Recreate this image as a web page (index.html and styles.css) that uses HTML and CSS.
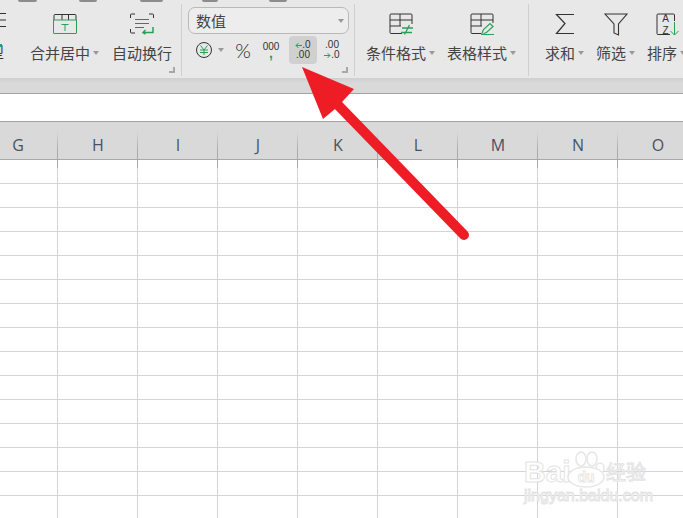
FILE: index.html
```html
<!DOCTYPE html>
<html lang="zh-CN">
<head>
    <meta charset="UTF-8">
    <meta name="viewport" content="width=device-width, initial-scale=1.0">
    <title>数值</title>
    <link rel="stylesheet" href="styles.css">
</head>
<body>
    <div class="ribbon">
        <div class="top-bits">
            <span class="bit b1"></span><span class="bit b2"></span><span class="bit b3"></span><span class="bit b4"></span><span class="bit b5"></span>
        </div>

        <div class="group group-align">
            <svg class="stub-icon" width="7" height="14" viewBox="0 0 7 14"><path d="M0 .5h6M0 7h6M0 13.500h6" stroke="#333" fill="none"/></svg>
            <span class="stub-text">型</span>
            <i class="stub-dot"></i>
            <div class="tool">
                <svg class="icon" width="24" height="23" viewBox="0 0 24 23">
                    <path d="M1 7V2.500q0-1 1-1h20q1 0 1 1V7M9 1.500V7M15.500 1.500V7" stroke="#333" fill="none"/>
                    <path d="M.5 7h23v13q0 .5-.5.5H1q-.5 0-.5-.5zM8.500 11.500h7M12 11.500V18" stroke="#27a05a" fill="none"/>
                </svg>
                <div class="label">合并居中<i class="caret"></i></div>
            </div>
            <div class="tool">
                <svg class="icon" width="24" height="23" viewBox="0 0 24 23">
                    <path d="M.5 5V2q0-1 1-1H5M19 1h3.500q1 0 1 1v3M.5 16v3q0 1 1 1H5" stroke="#333" fill="none"/>
                    <path d="M5 6.500h14M5 10.500h14M5 14.500h9" stroke="#666" fill="none"/>
                    <path d="M23 14v5.500H13M15.500 17L13 19.500l2.500 1.500" stroke="#27a05a" stroke-width="1.500" fill="none"/>
                </svg>
                <div class="label">自动换行</div>
            </div>
            <i class="corner"></i>
        </div>

        <div class="group group-number">
            <div class="combo"><span>数值</span><i class="caret"></i></div>
            <div class="num-row">
                <div class="cur">
                    <svg width="16" height="16" viewBox="0 0 16 16">
                        <circle cx="8" cy="8" r="7.500" stroke="#333" fill="none"/>
                        <path d="M4.500 3.500L8 8l3.500-4.500M4 8h8M4 10.500h8M8 8v5" stroke="#27a05a" fill="none"/>
                    </svg>
                    <i class="caret"></i>
                </div>
                <div class="nf pct">%</div>
                <div class="nf stack"><span>000</span><span class="green comma">,</span></div>
                <div class="nf stack active">
                    <span><svg class="mini" width="7" height="7" viewBox="0 0 7 7"><path d="M7 3.500H1M3.500 1L1 3.500 3.500 6" stroke="#27a05a" fill="none"/></svg>.0</span>
                    <span>.00</span>
                </div>
                <div class="nf stack">
                    <span>.00</span>
                    <span><svg class="mini" width="7" height="7" viewBox="0 0 7 7"><path d="M0 3.500h6M3.500 1L6 3.500 3.500 6" stroke="#27a05a" fill="none"/></svg>.0</span>
                </div>
            </div>
            <i class="corner"></i>
        </div>

        <div class="group group-style">
            <div class="tool">
                <svg class="icon" width="24" height="23" viewBox="0 0 24 23">
                    <path d="M13 20.500H2q-1 0-1-1V2q0-1 1-1h20q1 0 1 1v9M1 7h22M1 13h11M11 1v12" stroke="#333" fill="none"/>
                    <path d="M13 15h11M12 19.500h11M20.500 12l-5 9.500" stroke="#27a05a" stroke-width="1.300" fill="none"/>
                </svg>
                <div class="label">条件格式<i class="caret"></i></div>
            </div>
            <div class="tool">
                <svg class="icon" width="24" height="23" viewBox="0 0 24 23">
                    <path d="M11 20.500H2q-1 0-1-1V2q0-1 1-1h20q1 0 1 1v8M1 7h22M1 13h11M11 1v12" stroke="#333" fill="none"/>
                    <path d="M11.500 21.500l2-5 6.500-6 3 3-6.500 6-3 1M11 21.500h13" stroke="#27a05a" stroke-width="1.200" fill="none"/>
                </svg>
                <div class="label">表格样式<i class="caret"></i></div>
            </div>
        </div>

        <div class="group group-edit">
            <div class="tool">
                <svg class="icon" width="20" height="23" viewBox="0 0 20 23">
                    <path d="M19 1.500H1.500L10 10.500 1.500 20.500H19" stroke="#333" stroke-width="1.200" fill="none"/>
                </svg>
                <div class="label">求和<i class="caret"></i></div>
            </div>
            <div class="tool">
                <svg class="icon" width="24" height="23" viewBox="0 0 24 23">
                    <path d="M1 1h22l-8.500 10v11L10 20V11z" stroke="#333" stroke-width="1.100" fill="none"/>
                </svg>
                <div class="label">筛选<i class="caret"></i></div>
            </div>
            <div class="tool">
                <svg class="icon sort-icon" width="24" height="23" viewBox="0 0 24 23">
                    <path d="M14 21.500H2q-1 0-1-1V2q0-1 1-1h15.500q1 0 1 1v6" stroke="#333" fill="none"/>
                    <text x="9.500" y="9" class="sort-letter">A</text>
                    <text x="9.500" y="20.500" class="sort-letter">Z</text>
                    <path d="M18.500 9v13M14.500 18l4 4 4-4" stroke="#27a05a" fill="none"/>
                </svg>
                <div class="label">排序<i class="caret"></i></div>
            </div>
        </div>
    </div>

    <div class="band"></div>
    <div class="formula-bar"></div>

    <div class="col-header">
        <div class="col">G</div>
        <div class="col">H</div>
        <div class="col">I</div>
        <div class="col">J</div>
        <div class="col">K</div>
        <div class="col">L</div>
        <div class="col">M</div>
        <div class="col">N</div>
        <div class="col">O</div>
    </div>
    <div class="cells"></div>

    <svg class="arrow" width="683" height="518" viewBox="0 0 683 518">
        <path d="M338 105L464 235" stroke="#ee1c25" stroke-width="10" stroke-linecap="round"/>
        <path d="M302 67L354 89 342 102 335 109 323 119z" fill="#ee1c25"/>
    </svg>

    <div class="watermark">
        <div class="wm-logo">
            <span class="wm-bai">Bai</span>
            <svg class="wm-paw" width="40" height="38" viewBox="0 0 40 38">
                <g fill="#fff" stroke="#e6e6e6" stroke-width="1.500">
                    <ellipse cx="15" cy="9" rx="5" ry="7"/>
                    <ellipse cx="26" cy="9" rx="5" ry="7"/>
                    <ellipse cx="34" cy="18" rx="4" ry="5"/>
                    <ellipse cx="20" cy="27" rx="18" ry="10"/>
                </g>
                <text x="20" y="32" class="wm-du">du</text>
            </svg>
            <span class="wm-cn">经验</span>
        </div>
        <div class="wm-url">jingyan.baidu.com</div>
    </div>
</body>
</html>
```

FILE: styles.css
```css
body {
    margin: 0;
    width: 683px;
    height: 518px;
    overflow: hidden;
    position: relative;
    background-color: #fff;
    font-family: "Noto Sans CJK SC", "Liberation Sans", sans-serif;
    color: #444;
}

/* ribbon */
.ribbon {
    position: relative;
    display: flex;
    height: 78px;
    overflow: hidden;
    background-color: #e8e8e8;
}
.top-bits {
    position: absolute;
    top: 0;
    left: 0;
}
.bit {
    position: absolute;
    top: 0;
    height: 2px;
    background-color: #8c8c8c;
    border-radius: 0 0 5px 5px;
}
.b1 { left: 18px; width: 19px; }
.b2 { left: 79px; width: 18px; }
.b3 { left: 140px; width: 23px; }
.b4 { left: 202px; width: 16px; }
.b5 { left: 269px; width: 18px; }

.group {
    position: relative;
    display: flex;
    flex: none;
    box-sizing: border-box;
    height: 72px;
    margin-top: 4px;
    border-right: 1px solid #cfcfcf;
    gap: 12px;
}
.group-align { width: 182px; padding-left: 30px; gap: 13px; }
.group-number { width: 173px; padding-left: 6px; flex-direction: column; gap: 2px; }
.group-style { width: 174px; padding-left: 11px; }
.group-edit { padding-left: 16px; border-right: 0; }

.stub-icon {
    position: absolute;
    left: 0;
    top: 9px;
}
.stub-text {
    position: absolute;
    left: -11px;
    top: 38px;
    font-size: 15px;
    line-height: 20px;
    color: #333;
}
.stub-dot {
    position: absolute;
    left: 0;
    top: 40px;
    width: 2px;
    height: 3px;
    background-color: #27a05a;
}

.tool {
    display: flex;
    flex-direction: column;
    align-items: center;
    padding-top: 9px;
}
.icon {
    display: block;
}
.sort-icon {
    margin-left: 3px;
}
.label {
    display: flex;
    align-items: center;
    margin-top: 7px;
    font-size: 15px;
    line-height: 20px;
    white-space: nowrap;
}
.caret {
    display: inline-block;
    width: 0;
    height: 0;
    border-left: 3px solid transparent;
    border-right: 3px solid transparent;
    border-top: 4px solid #999;
}
.label .caret {
    margin-left: 3px;
}
.corner {
    position: absolute;
    right: 6px;
    bottom: 3px;
    width: 4px;
    height: 4px;
    border-right: 2px solid #a8a8a8;
    border-bottom: 2px solid #a8a8a8;
}

/* number group */
.combo {
    display: flex;
    align-items: center;
    justify-content: space-between;
    box-sizing: border-box;
    width: 161px;
    height: 27px;
    margin-top: 3px;
    padding: 0 4px 0 7px;
    border: 1px solid #b9b9b9;
    border-radius: 7px;
    background-color: #ededed;
    font-size: 15px;
}
.num-row {
    display: flex;
    align-items: center;
    margin-left: 8px;
}
.cur {
    display: flex;
    align-items: center;
    gap: 6px;
    width: 33px;
}
.nf {
    width: 28px;
    height: 28px;
    border-radius: 4px;
    font-family: "Liberation Sans", sans-serif;
    text-align: center;
}
.pct {
    font-family: "Lato", sans-serif;
    font-size: 20px;
    font-weight: 300;
    line-height: 28px;
    color: #222;
}
.stack {
    display: flex;
    flex-direction: column;
    justify-content: center;
    font-size: 10px;
    line-height: 10px;
    color: #333;
}
.mini {
    vertical-align: -1px;
}
.active {
    margin: 0 1px 0 4px;
    background-color: #d0d0d0;
}
.green {
    color: #27a05a;
}
.comma {
    margin-top: -3px;
    font-size: 14px;
    font-weight: bold;
    line-height: 9px;
}

.sort-letter {
    font-family: "Liberation Sans", sans-serif;
    font-size: 10px;
    text-anchor: middle;
    fill: #333;
}

/* bars under the ribbon */
.band {
    box-sizing: border-box;
    height: 16px;
    border-bottom: 1px solid #a2a2a2;
    background: linear-gradient(#cfcfcf, #d9d9d9 5px);
}
.formula-bar {
    box-sizing: border-box;
    height: 28px;
    border-bottom: 1px solid #a2a2a2;
    background-color: #fff;
}

/* sheet */
.col-header {
    display: grid;
    grid-template-columns: repeat(9, 80px);
    box-sizing: border-box;
    height: 38px;
    margin-left: -22px;
    border-bottom: 1px solid #a9a9a9;
    background-color: #d9d9d9;
}
.col {
    box-sizing: border-box;
    padding-left: 1px;
    font-family: "Open Sans", sans-serif;
    font-size: 16px;
    line-height: 46px;
    text-align: center;
    color: #47525e;
    border-right: 1px solid transparent;
    border-image: linear-gradient(#d9d9d9 20%, #a9a9a9 60%) 1;
}
.cells {
    height: 358px;
    background-image:
        linear-gradient(to right, #d4d4d4 1px, transparent 1px),
        linear-gradient(#d4d4d4 1px, transparent 1px);
    background-size: 80px 100%, 100% 24px;
    background-position: 57px 0, 0 23px;
}

/* overlays */
.arrow {
    position: absolute;
    left: 0;
    top: 0;
}
.watermark {
    position: absolute;
    left: 524px;
    top: 443px;
    width: 125px;
    color: #fff;
    -webkit-text-stroke: 1px #e4e4e4;
}
.wm-logo {
    display: flex;
    align-items: flex-end;
    height: 45px;
}
.wm-bai {
    width: 42px;
    font-family: "Liberation Sans", sans-serif;
    font-size: 30px;
    font-weight: bold;
    line-height: 32px;
}
.wm-paw {
    flex: none;
}
.wm-cn {
    font-size: 20px;
    line-height: 32px;
    white-space: nowrap;
}
.wm-du {
    font-family: "Liberation Sans", sans-serif;
    font-size: 14px;
    font-weight: bold;
    text-anchor: middle;
    fill: #fff;
    stroke: #e4e4e4;
    stroke-width: 0.8px;
}
.wm-url {
    font-family: "Liberation Sans", sans-serif;
    font-size: 16px;
    line-height: 16px;
    white-space: nowrap;
}
```
